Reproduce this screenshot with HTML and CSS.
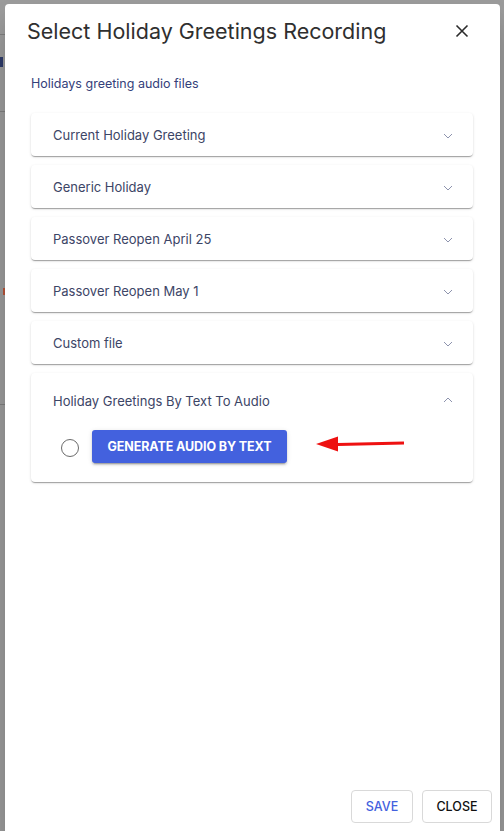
FILE: index.html
```html
<!DOCTYPE html>
<html>
<head>
<meta charset="utf-8">
<link rel="stylesheet" href="styles.css">
</head>
<body>
<div class="page">
  <div class="bg-line bg-line-1"></div>
  <div class="bg-mark-blue"></div>
  <div class="bg-line bg-line-2"></div>
  <div class="bg-mark-red"></div>
  <div class="bg-line bg-line-3"></div>
</div>
<div class="modal">
  <div class="modal-header">
    <h1 class="modal-title">Select Holiday Greetings Recording</h1>
    <button class="close-x" aria-label="close">
      <svg width="14" height="14" viewBox="0 0 14 14"><path d="M1.5 1.5 L12.5 12.5 M12.5 1.5 L1.5 12.5" stroke="#2b2b2b" stroke-width="1.6" fill="none"/></svg>
    </button>
  </div>
  <div class="modal-body">
    <div class="subtitle">Holidays greeting audio files</div>
    <div class="accordion">
      <div class="card"><div class="card-head"><span>Current Holiday Greeting</span><svg class="chev" width="10" height="6" viewBox="0 0 10 6"><path d="M1 1 L5 5 L9 1" stroke="#8d93ad" stroke-width="1" fill="none"/></svg></div></div>
      <div class="card"><div class="card-head"><span>Generic Holiday</span><svg class="chev" width="10" height="6" viewBox="0 0 10 6"><path d="M1 1 L5 5 L9 1" stroke="#8d93ad" stroke-width="1" fill="none"/></svg></div></div>
      <div class="card"><div class="card-head"><span>Passover Reopen April 25</span><svg class="chev" width="10" height="6" viewBox="0 0 10 6"><path d="M1 1 L5 5 L9 1" stroke="#8d93ad" stroke-width="1" fill="none"/></svg></div></div>
      <div class="card"><div class="card-head"><span>Passover Reopen May 1</span><svg class="chev" width="10" height="6" viewBox="0 0 10 6"><path d="M1 1 L5 5 L9 1" stroke="#8d93ad" stroke-width="1" fill="none"/></svg></div></div>
      <div class="card"><div class="card-head"><span>Custom file</span><svg class="chev" width="10" height="6" viewBox="0 0 10 6"><path d="M1 1 L5 5 L9 1" stroke="#8d93ad" stroke-width="1" fill="none"/></svg></div></div>
      <div class="card card-open">
        <div class="card-head"><span>Holiday Greetings By Text To Audio</span><svg class="chev" width="10" height="6" viewBox="0 0 10 6"><path d="M1 5 L5 1 L9 5" stroke="#8d93ad" stroke-width="1" fill="none"/></svg></div>
        <div class="card-content">
          <span class="radio"></span>
          <button class="gen-btn">GENERATE AUDIO BY TEXT</button>
          <svg class="arrow" width="92" height="18" viewBox="0 0 92 18"><path d="M22 9.5 L88 8" stroke="#ee1111" stroke-width="3" fill="none"/><polygon points="0,9 22,1.5 22,16.5" fill="#ee1111"/></svg>
        </div>
      </div>
    </div>
  </div>
  <div class="modal-footer">
    <button class="btn btn-save">SAVE</button>
    <button class="btn btn-close">CLOSE</button>
  </div>
</div>
</body>
</html>
```
FILE: styles.css
```css
html, body {
  margin: 0;
  padding: 0;
  height: 100%;
}
body {
  background: #9c9c9c;
  font-family: Inter, "Noto Sans", sans-serif;
  overflow: hidden;
  position: relative;
}
.page {
  height: 100%;
}
.bg-line {
  position: absolute;
  left: 0;
  width: 6px;
  height: 1px;
  background: #7f7f7f;
}
.bg-line-1 { top: 34px; }
.bg-line-2 { top: 111px; }
.bg-line-3 { top: 404px; }
.bg-mark-blue {
  position: absolute;
  left: 0;
  top: 57px;
  width: 3px;
  height: 10px;
  background: #2d3a6a;
}
.bg-mark-red {
  position: absolute;
  left: 3px;
  top: 288px;
  width: 2px;
  height: 7px;
  background: #b8553a;
}
.modal {
  position: absolute;
  left: 5px;
  top: 4px;
  width: 495px;
  bottom: -4px;
  background: #fff;
  border-radius: 4px;
  box-shadow: 0 11px 15px -7px rgba(0,0,0,.2), 0 24px 38px 3px rgba(0,0,0,.14);
  display: flex;
  flex-direction: column;
}
.modal-header {
  display: flex;
  align-items: center;
  justify-content: space-between;
  padding: 6px 31px 0 22px;
  height: 42px;
}
.modal-title {
  margin: 0;
  font-weight: 400;
  font-size: 21.5px;
  color: #2f2f2f;
  letter-spacing: 0;
}
.close-x {
  border: 0;
  background: none;
  padding: 0;
  width: 14px;
  height: 14px;
  display: flex;
}
.modal-body {
  flex: 1;
  padding: 0 27px 0 26px;
}
.subtitle {
  margin-top: 24px;
  font-size: 12.5px;
  color: #34407a;
  height: 16px;
  line-height: 16px;
}
.accordion {
  margin-top: 21px;
  display: flex;
  flex-direction: column;
  gap: 9px;
}
.card {
  background: #fff;
  border-radius: 4px;
  box-shadow: 0 2px 1px -1px rgba(0,0,0,.2), 0 1px 1px 0 rgba(0,0,0,.14), 0 1px 3px 0 rgba(0,0,0,.12);
}
.card-head {
  height: 43px;
  display: flex;
  align-items: center;
  justify-content: space-between;
  padding: 0 20px 0 22px;
  font-size: 13px;
  color: #3c4566;
}
.card-open .card-head {
  height: 55px;
}
.chev {
  display: block;
  margin-top: 2px;
}
.card-open .chev { margin-top: -2px; }
.card-content {
  display: flex;
  align-items: center;
  padding: 2px 0 19px 30px;
  height: 33px;
}
.radio {
  width: 16px;
  height: 16px;
  border: 1.3px solid #6b6b6b;
  border-radius: 50%;
  margin-top: 3px;
}
.gen-btn {
  margin-left: 13px;
  height: 33px;
  width: 195px;
  border: 0;
  border-radius: 3px;
  background: #4361de;
  color: #fff;
  font-family: Inter, "Noto Sans", sans-serif;
  font-weight: 700;
  font-size: 12.5px;
  letter-spacing: -0.1px;
  box-shadow: 0 3px 1px -2px rgba(0,0,0,.2), 0 2px 2px 0 rgba(0,0,0,.14), 0 1px 5px 0 rgba(0,0,0,.12);
}
.arrow {
  margin-left: 29px;
  margin-top: -6px;
  display: block;
}
.modal-footer {
  display: flex;
  justify-content: flex-end;
  gap: 9px;
  padding: 0 8px 12px 0;
}
.btn {
  height: 33px;
  border: 1px solid #d9d9d9;
  border-radius: 4px;
  background: #fff;
  font-family: Inter, "Noto Sans", sans-serif;
  font-size: 12.5px;
  font-weight: 500;
  padding: 0;
}
.btn-save {
  width: 62px;
  color: #4361de;
}
.btn-close {
  width: 70px;
  color: #111;
}
```
